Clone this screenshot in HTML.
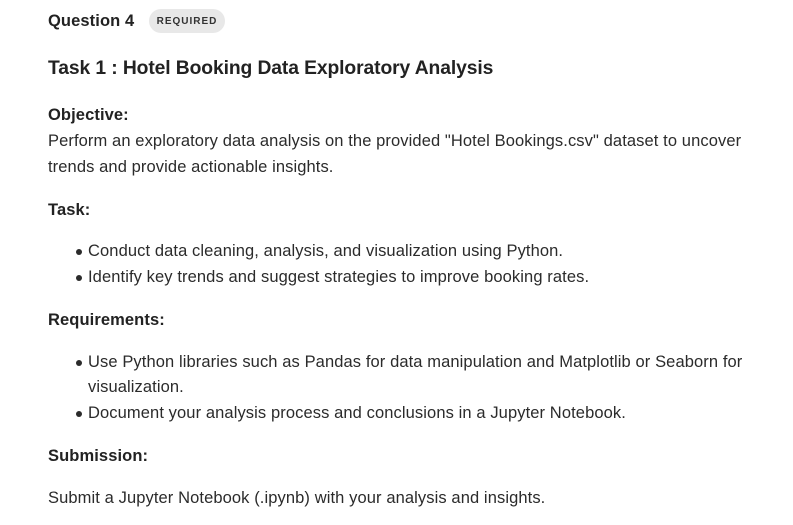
<!DOCTYPE html>
<html><head><meta charset="utf-8"><style>
body{margin:0;width:793px;height:525px;background:#fff;font-family:"Liberation Sans",Arial,sans-serif;color:#2b2b2b;position:relative;overflow:hidden}
.l{position:absolute;left:48px;white-space:nowrap;font-size:16.5px;line-height:26px;letter-spacing:0.1px}
.b{font-weight:bold;color:#222}
.li{left:88px}
.dot{position:absolute;left:76px;width:6px;height:6px;border-radius:50%;background:#2b2b2b}
.badge{position:absolute;left:149px;top:9px;width:76px;height:24px;border-radius:12px;background:#e8e8e8;font-size:10px;font-weight:bold;letter-spacing:1px;color:#333;text-align:center;line-height:26px}
</style></head><body>
<div class="l b" style="top:8px;font-size:16.5px">Question 4</div>
<div class="badge">REQUIRED</div>
<div class="l b" style="top:55px;font-size:19.3px;line-height:28px;letter-spacing:-0.1px">Task 1 : Hotel Booking Data Exploratory Analysis</div>
<div class="l b" style="top:102px">Objective:</div>
<div class="l" style="top:128px">Perform an exploratory data analysis on the provided "Hotel Bookings.csv" dataset to uncover</div>
<div class="l" style="top:154px">trends and provide actionable insights.</div>
<div class="l b" style="top:197px">Task:</div>
<div class="dot" style="top:249px"></div>
<div class="l li" style="top:238px">Conduct data cleaning, analysis, and visualization using Python.</div>
<div class="dot" style="top:275px"></div>
<div class="l li" style="top:264px">Identify key trends and suggest strategies to improve booking rates.</div>
<div class="l b" style="top:307px">Requirements:</div>
<div class="dot" style="top:360px"></div>
<div class="l li" style="top:349px">Use Python libraries such as Pandas for data manipulation and Matplotlib or Seaborn for</div>
<div class="l li" style="top:374px">visualization.</div>
<div class="dot" style="top:411px"></div>
<div class="l li" style="top:400px">Document your analysis process and conclusions in a Jupyter Notebook.</div>
<div class="l b" style="top:443px">Submission:</div>
<div class="l" style="top:485px">Submit a Jupyter Notebook (.ipynb) with your analysis and insights.</div>
</body></html>
